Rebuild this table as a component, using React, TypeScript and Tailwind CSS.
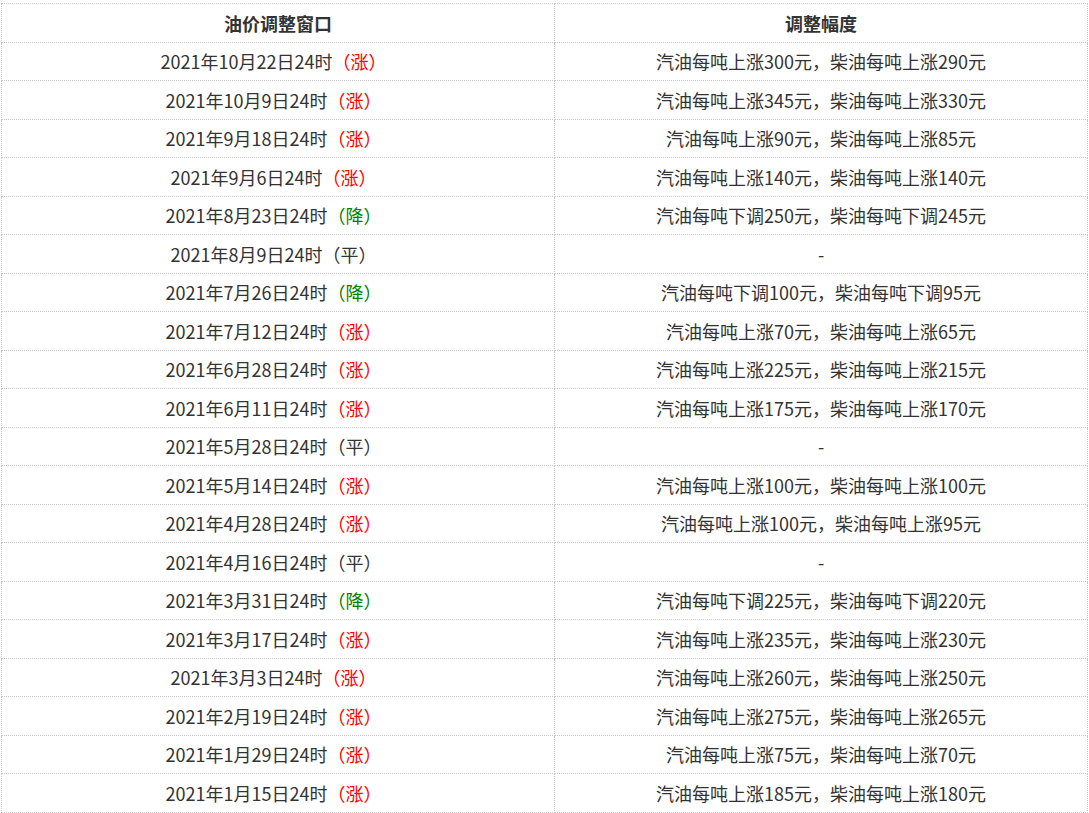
const rows: [string, "涨" | "降" | "平", string][] = [
  ["2021年10月22日24时", "涨", "汽油每吨上涨300元，柴油每吨上涨290元"],
  ["2021年10月9日24时", "涨", "汽油每吨上涨345元，柴油每吨上涨330元"],
  ["2021年9月18日24时", "涨", "汽油每吨上涨90元，柴油每吨上涨85元"],
  ["2021年9月6日24时", "涨", "汽油每吨上涨140元，柴油每吨上涨140元"],
  ["2021年8月23日24时", "降", "汽油每吨下调250元，柴油每吨下调245元"],
  ["2021年8月9日24时", "平", "-"],
  ["2021年7月26日24时", "降", "汽油每吨下调100元，柴油每吨下调95元"],
  ["2021年7月12日24时", "涨", "汽油每吨上涨70元，柴油每吨上涨65元"],
  ["2021年6月28日24时", "涨", "汽油每吨上涨225元，柴油每吨上涨215元"],
  ["2021年6月11日24时", "涨", "汽油每吨上涨175元，柴油每吨上涨170元"],
  ["2021年5月28日24时", "平", "-"],
  ["2021年5月14日24时", "涨", "汽油每吨上涨100元，柴油每吨上涨100元"],
  ["2021年4月28日24时", "涨", "汽油每吨上涨100元，柴油每吨上涨95元"],
  ["2021年4月16日24时", "平", "-"],
  ["2021年3月31日24时", "降", "汽油每吨下调225元，柴油每吨下调220元"],
  ["2021年3月17日24时", "涨", "汽油每吨上涨235元，柴油每吨上涨230元"],
  ["2021年3月3日24时", "涨", "汽油每吨上涨260元，柴油每吨上涨250元"],
  ["2021年2月19日24时", "涨", "汽油每吨上涨275元，柴油每吨上涨265元"],
  ["2021年1月29日24时", "涨", "汽油每吨上涨75元，柴油每吨上涨70元"],
  ["2021年1月15日24时", "涨", "汽油每吨上涨185元，柴油每吨上涨180元"],
];

const trendColor = (t: string) =>
  t === "涨" ? "text-[#ff0000]" : t === "降" ? "text-[#008000]" : "text-[#333333]";

const cell = "border border-dotted border-[#c8c8c8] text-center p-0";

export default function App() {
  return (
    <div className="bg-white px-[1px] pt-[3px] font-['Microsoft_YaHei','Noto_Sans_CJK_SC',sans-serif] text-[18px] leading-none text-[#333333]">
      <table className="w-[1087px] border-collapse table-fixed">
        <thead>
          <tr className="h-[38.5px]">
            <th className={`${cell} w-[553px] font-bold`}>油价调整窗口</th>
            <th className={`${cell} font-bold`}>调整幅度</th>
          </tr>
        </thead>
        <tbody>
          {rows.map(([date, trend, detail]) => (
            <tr key={date} className="h-[38.5px]">
              <td className={`${cell} pr-[9px]`}>
                {date}
                <span className={trendColor(trend)}>（{trend}）</span>
              </td>
              <td className={cell}>{detail}</td>
            </tr>
          ))}
        </tbody>
      </table>
    </div>
  );
}
